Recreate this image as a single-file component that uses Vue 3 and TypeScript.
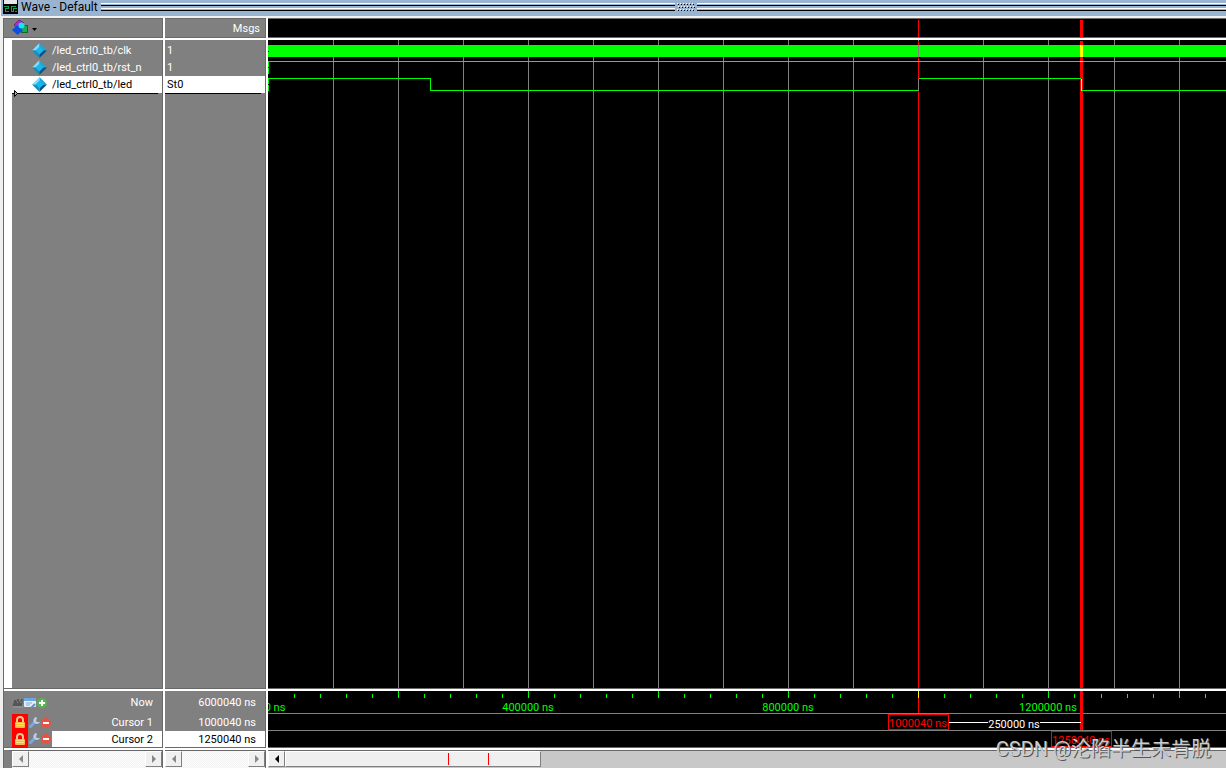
<script setup lang="ts">
const signals = [
  { name: '/led_ctrl0_tb/clk', value: '1', selected: false },
  { name: '/led_ctrl0_tb/rst_n', value: '1', selected: false },
  { name: '/led_ctrl0_tb/led', value: 'St0', selected: true },
]
const cursors = [
  { name: 'Cursor 1', time: '1000040 ns', selected: false },
  { name: 'Cursor 2', time: '1250040 ns', selected: true },
]
const gridLines: number[] = Array.from({ length: 40 }, (_, i) => Math.round((i + 1) * 65.04))
const ticks = Array.from({ length: 100 }, (_, i) => ({
  x: Math.round((i + 1) * 26.016),
  major: (i + 1) % 5 === 0,
}))
const labels = [
  { x: 7, text: '0 ns' },
  { x: 260, text: '400000 ns' },
  { x: 520, text: '800000 ns' },
  { x: 780, text: '1200000 ns' },
]
const dots = Array.from({ length: 18 }, (_, i) => ({
  x: (i % 6) * 3 + (Math.floor(i / 6) % 2),
  y: Math.floor(i / 6) * 3,
}))
</script>

<template>
  <div class="window">
    <header class="title">
      <svg class="logo" width="15" height="14" shape-rendering="crispEdges" aria-hidden="true">
        <rect width="15" height="14" fill="#000" />
        <rect x="1" width="13" height="4" fill="#e8e8e8" />
        <path d="M1 6h5v1h-5zM5 6h1v3h-1zM2 8h4v1h-4zM2 9h1v3h-1zM2 11h4v1h-4zM8 6h5v1h-5zM8 6h1v6h-1zM8 11h3v1h-3zM10 8h1v4h-1zM10 8h4v1h-4zM12 11h2v1h-2z" fill="#12a04c" />
      </svg>
      <span class="caption">Wave - Default</span>
      <i class="rails"></i>
      <svg class="grip" width="18" height="9" shape-rendering="crispEdges" aria-hidden="true">
        <g v-for="d in dots" :key="`${d.x}-${d.y}`">
          <rect :x="d.x" :y="d.y" width="1" height="1" fill="#fff" />
          <rect :x="d.x + 1" :y="d.y + 1" width="1" height="1" fill="#000" />
        </g>
      </svg>
      <i class="rails right"></i>
    </header>

    <main class="body">
      <section class="col names">
        <div class="head">
          <button class="picker" aria-label="Signal groups">
            <svg width="30" height="18" aria-hidden="true">
              <path d="M2 6l5-5 5 3-5 6z" fill="#b52ad0" stroke="#70208c" />
              <rect x="9.500" y="6.500" width="6" height="7" fill="#1fa855" stroke="#0d6931" />
              <path d="M5.500 6l5.500 5-5.500 5L0 11z" fill="#0a50e5" />
              <circle cx="9.500" cy="6.500" r="3" fill="#14e5f5" />
              <path d="M20 9h5l-2.500 3z" fill="#000" />
            </svg>
          </button>
        </div>
        <div class="list">
          <div v-for="s in signals" :key="s.name" class="signal" :class="{ selected: s.selected }">
            <svg width="15" height="15" aria-hidden="true">
              <path d="M7.500 0L0 7.500h7.500z" fill="#8adcf5" />
              <path d="M7.500 0L15 7.500H7.500z" fill="#22a4dc" />
              <path d="M0 7.500L7.500 15V7.500z" fill="#178bc4" />
              <path d="M15 7.500L7.500 15V7.500z" fill="#07537f" />
              <path d="M7.500 3.500l4 4-4 4-4-4z" fill="#18b8ef" />
            </svg>
            <span>{{ s.name }}</span>
          </div>
          <div class="insert"><svg width="5" height="8" aria-hidden="true"><path d="M.5 .5v6l3-3z" fill="#aaa" stroke="#000" /></svg></div>
        </div>
        <div class="cursors">
          <div class="now">
            <div class="icons">
              <svg width="12" height="12" aria-hidden="true"><path d="M1 9l2-6 1 3 2-4 1 4 3-4v5" fill="none" stroke="#4c4c4c" /><path d="M2 6h8v3H1z" fill="#555" /><path d="M1 10h10" stroke="#999" /></svg>
              <svg width="12" height="12" aria-hidden="true"><rect y="1" width="12" height="9" rx="1" fill="#e2effb" /><rect y="1" width="12" height="3" fill="#6fa6de" /><path d="M2 6h6M2 8h4" stroke="#7faad5" /><path d="M7 11l4-4" stroke="#5f8fc4" stroke-width="2" /></svg>
              <svg width="12" height="12" aria-hidden="true"><circle cx="6" cy="6" r="5" fill="#56b650" /><path d="M6 3v6M3 6h6" stroke="#fff" stroke-width="2" /></svg>
            </div>
            <span>Now</span>
          </div>
          <div v-for="c in cursors" :key="c.name" class="cursor" :class="{ selected: c.selected }">
            <div class="icons">
              <button class="lock" :aria-label="`Lock ${c.name}`">
                <svg width="12" height="13" aria-hidden="true"><path d="M3 6V4a3 3 0 0 1 6 0v2" fill="none" stroke="#e8c98d" stroke-width="2" /><rect x="1" y="6" width="10" height="6" rx="1" fill="#f5bd38" /><path d="M2 7.500h8M2 9.500h8" stroke="#ffe08a" /></svg>
              </button>
              <button :aria-label="`Edit ${c.name}`">
                <svg width="12" height="12" aria-hidden="true"><path d="M2.500 9.500L7 5" stroke="#7aa6e6" stroke-width="3" stroke-linecap="round" /><path d="M9 0a3.500 3.500 0 1 0 3 5L9 5l-1-1z" fill="#b8cdea" /></svg>
              </button>
              <button :aria-label="`Remove ${c.name}`">
                <svg width="12" height="12" aria-hidden="true"><circle cx="6" cy="6" r="5" fill="#e65345" /><path d="M3 6h6" stroke="#fff" stroke-width="2" /></svg>
              </button>
            </div>
            <span>{{ c.name }}</span>
          </div>
        </div>
        <div class="scroll">
          <button aria-label="Scroll names left"><svg width="6" height="8" aria-hidden="true"><path d="M5 0v8L1 4z" fill="#888" /></svg></button>
          <button aria-label="Scroll names right"><svg width="6" height="8" aria-hidden="true"><path d="M1 0v8l4-4z" fill="#888" /></svg></button>
        </div>
      </section>

      <section class="col values">
        <div class="head">Msgs</div>
        <div class="list">
          <div v-for="s in signals" :key="s.name" class="value" :class="{ selected: s.selected }">{{ s.value }}</div>
          <div class="insert"></div>
        </div>
        <div class="cursors">
          <div class="now"><span>6000040 ns</span></div>
          <div v-for="c in cursors" :key="c.name" class="cursor" :class="{ selected: c.selected }"><span>{{ c.time }}</span></div>
        </div>
        <div class="scroll">
          <button aria-label="Scroll values left"><svg width="6" height="8" aria-hidden="true"><path d="M5 0v8L1 4z" fill="#888" /></svg></button>
          <button aria-label="Scroll values right"><svg width="6" height="8" aria-hidden="true"><path d="M1 0v8l4-4z" fill="#888" /></svg></button>
        </div>
      </section>

      <section class="col waves">
        <div class="head">
          <svg class="fill" shape-rendering="crispEdges" aria-hidden="true">
            <rect x="650" y="1" width="1" height="100%" fill="#f00" />
            <rect x="812" y="1" width="3" height="100%" fill="#f00" />
          </svg>
        </div>
        <div class="list">
          <svg class="fill" shape-rendering="crispEdges" role="img" aria-label="Signal waveforms">
            <rect v-for="x in gridLines" :key="x" :x="x" y="0" width="1" height="100%" fill="#808080" />
            <rect x="650" y="1" width="1" height="100%" fill="#f00" />
            <rect x="812" y="1" width="3" height="100%" fill="#f00" />
            <g fill="#0f0">
              <rect y="5" width="100%" height="12" />
              <rect y="21" width="100%" height="1" />
              <rect y="38" width="163" height="1" />
              <rect x="162" y="39" width="1" height="12" />
              <rect x="162" y="50" width="488" height="1" />
              <rect x="651" y="38" width="162" height="1" />
              <rect x="813" y="50" width="100%" height="1" />
              <rect y="22" width="1" height="5" /><rect y="28" width="1" height="6" />
              <rect y="39" width="1" height="5" /><rect y="45" width="1" height="6" />
            </g>
            <rect y="11" width="1" height="1" />
            <rect x="650" y="5" width="1" height="12" fill="#808080" />
            <rect x="650" y="39" width="1" height="12" fill="#808080" />
            <g fill="#ff0">
              <rect x="812" y="5" width="3" height="12" />
              <rect x="812" y="21" width="3" height="1" />
              <rect x="813" y="39" width="1" height="12" />
            </g>
          </svg>
        </div>
        <div class="cursors">
          <svg class="fill" shape-rendering="crispEdges" role="img" aria-label="Timeline and cursors">
            <rect x="650" y="0" width="1" height="22" fill="#f00" />
            <rect v-for="t in ticks" :key="t.x" :x="t.x" :y="t.major ? 0 : 3" width="1" :height="t.major ? 7 : 4" :fill="t.x === 650 ? '#ff0' : '#0f0'" />
            <rect y="22" width="100%" height="1" fill="#808080" />
            <rect y="39" width="100%" height="1" fill="#808080" />
            <rect x="812" y="0" width="3" height="39" fill="#f00" />
            <g fill="#0f0" text-anchor="middle">
              <text v-for="l in labels" :key="l.text" :x="l.x" y="20">{{ l.text }}</text>
            </g>
            <rect x="680" y="31" width="133" height="1" fill="#fff" />
            <rect x="720" y="24" width="52" height="14" />
            <text x="746" y="37" text-anchor="middle" fill="#fff">250000 ns</text>
            <rect x="620.500" y="23.500" width="60" height="15" fill="#000" stroke="#f00" />
            <text x="650" y="36" text-anchor="middle" fill="#f00">1000040 ns</text>
            <rect x="783.500" y="40.500" width="60" height="15" fill="#000" stroke="#f00" />
            <text x="813" y="53" text-anchor="middle" fill="#f00">1250040 ns</text>
          </svg>
        </div>
        <div class="scroll">
          <button aria-label="Scroll waves left"><svg width="6" height="8" aria-hidden="true"><path d="M5 0v8L1 4z" fill="#000" /></svg></button>
          <div class="thumb"><i></i><i></i></div>
        </div>
      </section>
    </main>
    <div class="watermark">CSDN @沦陷半生未肯脱</div>
  </div>
</template>

<style>
body { margin: 0; }
</style>

<style scoped>
.window {
  position: relative;
  display: flex;
  flex-direction: column;
  height: 100vh;
  min-height: 300px;
  overflow: hidden;
  background: #f0f0f0;
  color: #fff;
  font: 11px/17px Roboto, "Noto Sans CJK SC", sans-serif;
}
svg { display: block; flex: none; }
button { display: block; padding: 0; border: 0; background: none; }
.title {
  display: flex;
  flex: none;
  align-items: flex-start;
  height: 16px;
  margin-left: 1px;
  background: #99b4d1;
  color: #000;
}
.logo { margin-left: 2px; }
.caption { width: 80px; margin-left: 3px; line-height: 15px; white-space: nowrap; font-size: 12px; }
.rails {
  flex: 574 1 0;
  height: 8px;
  margin-top: 3px;
  background: linear-gradient(#fff 0 1px, #99b4d1 1px 2px, #000 2px 3px, #99b4d1 3px 5px, #fff 5px 6px, #99b4d1 6px 7px, #000 7px 8px);
}
.rails.right { flex-grow: 529; }
.grip { margin: 3px 2px 0; }
.body {
  display: grid;
  flex: 1;
  grid-template-columns: 159px 101px minmax(0, 1fr);
  column-gap: 2px;
  min-height: 0;
  margin-top: 2px;
  margin-left: 3px;
  padding-left: 1px;
  background: #fff;
}
.col {
  display: grid;
  grid-template-rows: 20px minmax(0, 1fr) 57px 18px;
  row-gap: 2px;
  min-width: 0;
}
.head { border-top: 1px solid #696969; border-bottom: 1px solid #696969; background: #808080; }
.names { box-shadow: -1px 0 #696969; }
.names > *, .values > * { border-right: 1px solid #696969; }
.picker { margin-left: 8px; }
.values .head { padding-right: 5px; text-align: right; line-height: 19px; }
.list { overflow: hidden; background: #808080; border-bottom: 1px solid #696969; }
.names .list { padding-left: 8px; padding-top: 2px; background: linear-gradient(90deg, #fff 8px, #808080 8px); }
.values .list { padding-top: 2px; }
.signal { display: flex; align-items: center; height: 17px; padding-left: 20px; gap: 5px; }
.value { height: 17px; padding-left: 2px; }
.signal.selected, .value.selected, .cursor.selected { background: #fff; color: #000; }
.insert { position: relative; height: 1px; margin-right: 4px; background: #000; }
.insert svg { position: absolute; top: -3px; left: 2px; }
.cursors { background: #808080; border-bottom: 1px solid #696969; }
.now, .cursor { display: flex; align-items: center; justify-content: flex-end; height: 17px; padding-right: 9px; }
.now { height: 23px; }
.cursor.selected { height: 16px; }
.names .now, .names .cursor { justify-content: space-between; padding-left: 8px; }
.names .cursor.selected { background: linear-gradient(90deg, #808080 48px, #fff 48px); }
.icons { display: flex; align-items: center; }
.cursor .lock { padding: 2px; background: #f00; }
.scroll {
  display: flex;
  justify-content: space-between;
  border-top: 1px solid #696969;
  background: repeating-conic-gradient(#fff 0 25%, #f0f0f0 0 50%) 0 0 / 2px 2px;
}
.names .scroll { border-left: 8px solid #808080; }
.scroll button {
  display: grid;
  box-sizing: border-box;
  place-items: center;
  width: 17px;
  height: 16px;
  border: 1px solid;
  border-color: #fff #808080 #808080 #fff;
  background: #f0f0f0;
}
.waves .head, .waves .list, .waves .cursors { background: #000; }
.fill { width: 100%; height: 100%; }
.waves .scroll { justify-content: flex-start; background: #c8c8c8; }
.thumb {
  display: flex;
  box-sizing: border-box;
  justify-content: flex-end;
  gap: 39px;
  width: 256px;
  height: 16px;
  padding: 1px 51px 1px 0;
  border: 1px solid;
  border-color: #fff #808080 #808080 #fff;
  background: #f0f0f0;
}
.thumb i { flex: none; width: 1px; background: #f00; }
.watermark {
  position: absolute;
  right: 15px;
  bottom: 4px;
  color: #ccc;
  font: 20px/30px Roboto, "Noto Sans CJK SC", sans-serif;
  text-shadow: 1px 1px #555;
}
</style>
